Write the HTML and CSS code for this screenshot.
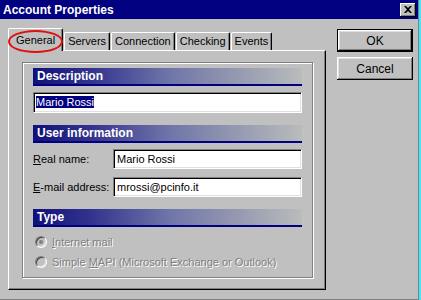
FILE: index.html
```html
<!DOCTYPE html>
<html lang="en">
<head>
  <meta charset="UTF-8" />
  <title>Account Properties</title>
  <link rel="stylesheet" href="styles.css">
</head>
<body>
  <div class="window">
    <div class="titlebar">
      <span class="title">Account Properties</span>
      <button class="close-btn" title="Close">
        <svg width="8" height="7" viewBox="0 0 8 7"><path d="M0 0h2l2 2 2-2h2L5 3.5 8 7H6L4 5 2 7H0l3-3.5z" fill="#000"/></svg>
      </button>
    </div>

    <div class="body">
      <div class="sheet">
        <div class="tabs">
          <div class="tab active">General</div>
          <div class="tab">Servers</div>
          <div class="tab">Connection</div>
          <div class="tab">Checking</div>
          <div class="tab">Events</div>
          <span class="mark"></span>
        </div>

        <div class="panel">
          <div class="group">
            <div class="bar">Description</div>
            <div class="field wide"><span class="sel">Mario Rossi</span></div>

            <div class="bar">User information</div>
            <div class="row">
              <label><u>R</u>eal name:</label>
              <div class="field">Mario Rossi</div>
            </div>
            <div class="row">
              <label><u>E</u>-mail address:</label>
              <div class="field">mrossi@pcinfo.it</div>
            </div>

            <div class="bar">Type</div>
            <div class="radio checked"><i></i><span><u>I</u>nternet mail</span></div>
            <div class="radio"><i></i><span>Simple <u>M</u>API (Microsoft Exchange or Outlook)</span></div>
          </div>
        </div>
      </div>

      <div class="buttons">
        <button class="btn default">OK</button>
        <button class="btn">Cancel</button>
      </div>
    </div>
  </div>
</body>
</html>
```

FILE: styles.css
```css
body, html {
  margin: 0; padding: 0; background: #40e8ff;
  font-family: 'Liberation Sans', Arial, sans-serif; font-size: 11px; color: #000;
}
.window {
  width: 419px; height: 300px; box-sizing: border-box;
  background: #c0c0c0; border-right: 1px solid #808080; border-bottom: 1px solid #808080;
}
.titlebar {
  height: 19px; background: #000080; color: #fff;
  display: flex; align-items: center; justify-content: space-between;
  padding: 0 2px 0 3px;
}
.title { font-weight: 700; font-size: 12px; }
.close-btn {
  width: 16px; height: 14px; padding: 0; margin: 0;
  background: #c0c0c0; border: none;
  box-shadow: inset -1px -1px #000, inset 1px 1px #fff, inset -2px -2px #808080;
  display: flex; align-items: center; justify-content: center;
}

.body { display: flex; gap: 11px; padding: 9px 0 0 8px; }
.sheet { width: 318px; }

.tabs { position: relative; display: flex; align-items: flex-end; height: 22px; }
.tab {
  height: 18px; box-sizing: border-box; padding: 0 3px; line-height: 17px;
  border-top: 1px solid #fff; border-left: 1px solid #fff; border-right: 1px solid #000;
  border-radius: 2px 2px 0 0;
  box-shadow: inset -1px 0 #808080;
  margin-left: 1px;
}
.tab.active {
  height: 23px; padding: 0 7px; line-height: 22px; margin-left: 0;
  background: #c0c0c0; position: relative; z-index: 1; margin-bottom: -1px;
}
.mark {
  position: absolute; left: 0; top: 2px; width: 51px; height: 19px;
  border: 2px solid #e01010; border-radius: 50%; z-index: 2;
}

.panel {
  height: 240px; box-sizing: border-box;
  border-top: 1px solid #fff; border-left: 1px solid #fff;
  border-right: 1px solid #000; border-bottom: 1px solid #000;
  box-shadow: inset -1px -1px #808080;
  padding: 11px 12px 12px 13px;
}
.group {
  height: 216px; box-sizing: border-box;
  border: 1px solid #808080;
  box-shadow: 1px 1px 0 #fff, inset 1px 1px 0 #fff;
  padding: 5px 10px 0 10px;
  display: flex; flex-direction: column;
}
.bar {
  height: 16px; line-height: 16px; padding-left: 4px;
  border-bottom: 2px solid #000080;
  background: linear-gradient(to right, #10107a, #34348e 22%, #6e74a8 50%, #9498b0 75%, #b8bcbc);
  color: #fff; font-weight: 700; font-size: 12px;
  margin-top: 12px;
}
.bar:first-child { margin-top: 0; }

.field {
  flex: 1; height: 20px; box-sizing: border-box; background: #fff;
  border-top: 1px solid #808080; border-left: 1px solid #808080;
  border-right: 1px solid #fff; border-bottom: 1px solid #fff;
  box-shadow: inset 1px 1px #000, inset -1px -1px #dfdfdf;
  padding: 0 3px; line-height: 18px;
}
.field.wide { flex: none; height: 21px; margin-top: 6px; line-height: 19px; padding-left: 2px; }
.sel { background: #000080; color: #fff; }

.row { display: flex; align-items: center; margin-top: 8px; }
.bar + .row { margin-top: 6px; }
.row label { width: 80px; }

.radio {
  display: flex; align-items: center; gap: 5px; height: 14px;
  margin-top: 6px; padding-left: 2px;
  color: #808080; text-shadow: 1px 1px 0 #fff;
}
.bar + .radio { margin-top: 8px; }
.radio i {
  width: 12px; height: 12px; box-sizing: border-box; border-radius: 50%;
  border: 1px solid; border-color: #808080 #fff #fff #808080;
  box-shadow: inset 1px 1px #404040, inset -1px -1px #dfdfdf;
  background: #c0c0c0; display: flex; align-items: center; justify-content: center;
}
.radio.checked i::after {
  content: ""; width: 4px; height: 4px; border-radius: 50%; background: #808080;
}

.buttons { display: flex; flex-direction: column; gap: 5px; padding-top: 1px; }
.btn {
  width: 76px; height: 23px; padding: 0; margin: 0;
  font-family: 'Liberation Sans', Arial, sans-serif; font-size: 12px; color: #000;
  background: #c0c0c0; border: none;
  box-shadow: inset -1px -1px #000, inset 1px 1px #fff, inset -2px -2px #808080, inset 2px 2px #dfdfdf;
}
.btn.default {
  border: 1px solid #000;
}
```
